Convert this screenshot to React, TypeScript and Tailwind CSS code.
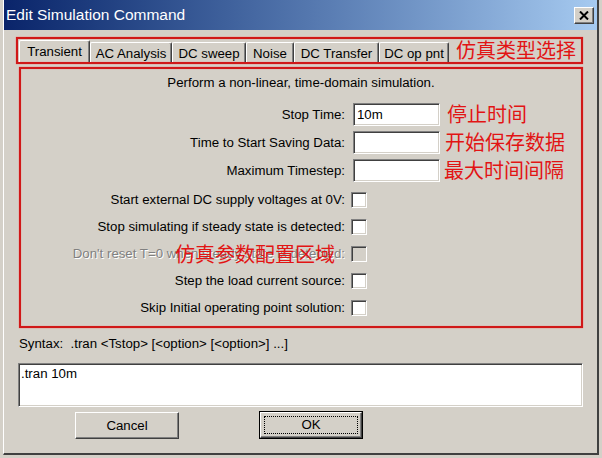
import type { ReactNode } from 'react';

const font = { fontFamily: '"Liberation Sans", Arial, "Noto Sans CJK SC", sans-serif' };

const sunken =
  'border border-t-[#808080] border-l-[#808080] border-b-white border-r-white shadow-[inset_1px_1px_0_#404040,inset_-1px_-1px_0_#d4d0c8]';
const raised =
  'border border-t-white border-l-white border-b-[#404040] border-r-[#404040] shadow-[inset_-1px_-1px_0_#808080,inset_1px_1px_0_#d4d0c8]';
const redBox = 'border-2 border-[#d01818] shadow-[0_0_1px_#ff5050,inset_0_0_1px_#ff5050]';
const note = 'text-[20px] leading-[24px] text-[#e21414]';
const tabEdge =
  'border border-b-0 border-t-white border-l-white border-r-[#404040] shadow-[inset_-1px_0_0_#808080] rounded-t-[2px]';

const tabs = [
  { label: 'AC Analysis', w: 'w-[82px]' },
  { label: 'DC sweep', w: 'w-[74px]' },
  { label: 'Noise', w: 'w-[48px]' },
  { label: 'DC Transfer', w: 'w-[85px]' },
  { label: 'DC op pnt', w: 'w-[70px]' },
];

function FieldRow({ label, value, hint, gap }: { label: string; value?: string; hint: string; gap: string }) {
  return (
    <div className="flex items-center h-[23px]">
      <div className="w-[324px] text-right">{label}</div>
      <div className={`ml-[8px] w-[87px] h-[23px] bg-white px-[3px] flex items-center ${sunken}`}>{value}</div>
      <span className={`${gap} ${note}`}>{hint}</span>
    </div>
  );
}

function CheckRow({ label, disabled, children }: { label: string; disabled?: boolean; children?: ReactNode }) {
  return (
    <div className="relative flex items-center h-[27px]">
      <div
        className={`w-[324px] text-right ${disabled ? 'text-[#808080] [text-shadow:1px_1px_0_#fff]' : ''}`}
      >
        {label}
      </div>
      <div className={`ml-[6px] w-[16px] h-[16px] ${disabled ? 'bg-[#d4d0c8]' : 'bg-white'} ${sunken}`} />
      {children}
    </div>
  );
}

export default function App() {
  return (
    <div className="w-[602px] h-[458px] bg-[#d4d0c8] text-black text-[13.25px] leading-[16px]" style={font}>
      <div className="ml-[3px] w-[596px] h-[455px] border-l border-white border-r-2 border-r-[#404040] border-b-2 border-b-[#404040] flex flex-col">
        {/* Title bar */}
        <div className="h-[30px] flex items-center justify-between pl-[2px] pr-[3px] bg-gradient-to-r from-[#0a246a] to-[#a6caf0]">
          <span className="text-white text-[15.5px]">Edit Simulation Command</span>
          <div className={`w-[20px] h-[17px] bg-[#d4d0c8] flex items-center justify-center ${raised}`}>
            <svg width="10" height="9" viewBox="0 0 10 9">
              <path d="M1 0.5 L9 8.5 M9 0.5 L1 8.5" stroke="#000" strokeWidth="2" />
            </svg>
          </div>
        </div>

        <div className="flex-1 flex flex-col pl-[12px] pr-[14px]">
          {/* Tab strip */}
          <div className={`mt-[7px] h-[27px] flex items-end pl-[1px] ${redBox}`}>
            <div className={`w-[71px] h-[22px] flex items-center justify-center pt-[1px] ${tabEdge}`}>Transient</div>
            {tabs.map((t) => (
              <div key={t.label} className={`${t.w} h-[20px] flex items-center justify-center pt-[3px] ${tabEdge}`}>
                {t.label}
              </div>
            ))}
            <span className={`ml-[7px] self-center ${note}`}>仿真类型选择</span>
          </div>

          {/* Parameter panel */}
          <div className={`mt-[3px] ml-[3px] h-[261px] flex flex-col ${redBox}`}>
            <div className="mt-[6px] text-center">Perform a non-linear, time-domain simulation.</div>
            <div className="mt-[12px] flex flex-col gap-[5px]">
              <FieldRow label="Stop Time:" value="10m" hint="停止时间" gap="ml-[7px]" />
              <FieldRow label="Time to Start Saving Data:" hint="开始保存数据" gap="ml-[5px]" />
              <FieldRow label="Maximum Timestep:" hint="最大时间间隔" gap="ml-[4px]" />
            </div>
            <div className="mt-[4px] flex flex-col">
              <CheckRow label="Start external DC supply voltages at 0V:" />
              <CheckRow label="Stop simulating if steady state is detected:" />
              <CheckRow label="Don't reset T=0 when steady state is detected:" disabled>
                <span className={`absolute left-[154px] top-[3px] ${note}`}>仿真参数配置区域</span>
              </CheckRow>
              <CheckRow label="Step the load current source:" />
              <CheckRow label="Skip Initial operating point solution:" />
            </div>
          </div>

          <div className="mt-[8px] pl-[3px]">Syntax:&nbsp; .tran &lt;Tstop&gt; [&lt;option&gt; [&lt;option&gt;] ...]</div>

          <div className={`mt-[11px] ml-[2px] w-[565px] h-[44px] bg-white px-[2px] py-[2px] ${sunken}`}>.tran 10m</div>

          <div className="mt-[5px] flex">
            <button className={`ml-[59px] w-[104px] h-[27px] bg-[#d4d0c8] ${raised}`}>Cancel</button>
            <button className="relative ml-[80px] w-[104px] h-[28px] -mt-[1px] bg-[#d4d0c8] border border-black">
              <span className={`absolute inset-0 flex items-center justify-center ${raised}`}>OK</span>
              <span className="absolute inset-[4px] border border-dotted border-black" />
            </button>
          </div>
        </div>
      </div>
    </div>
  );
}
